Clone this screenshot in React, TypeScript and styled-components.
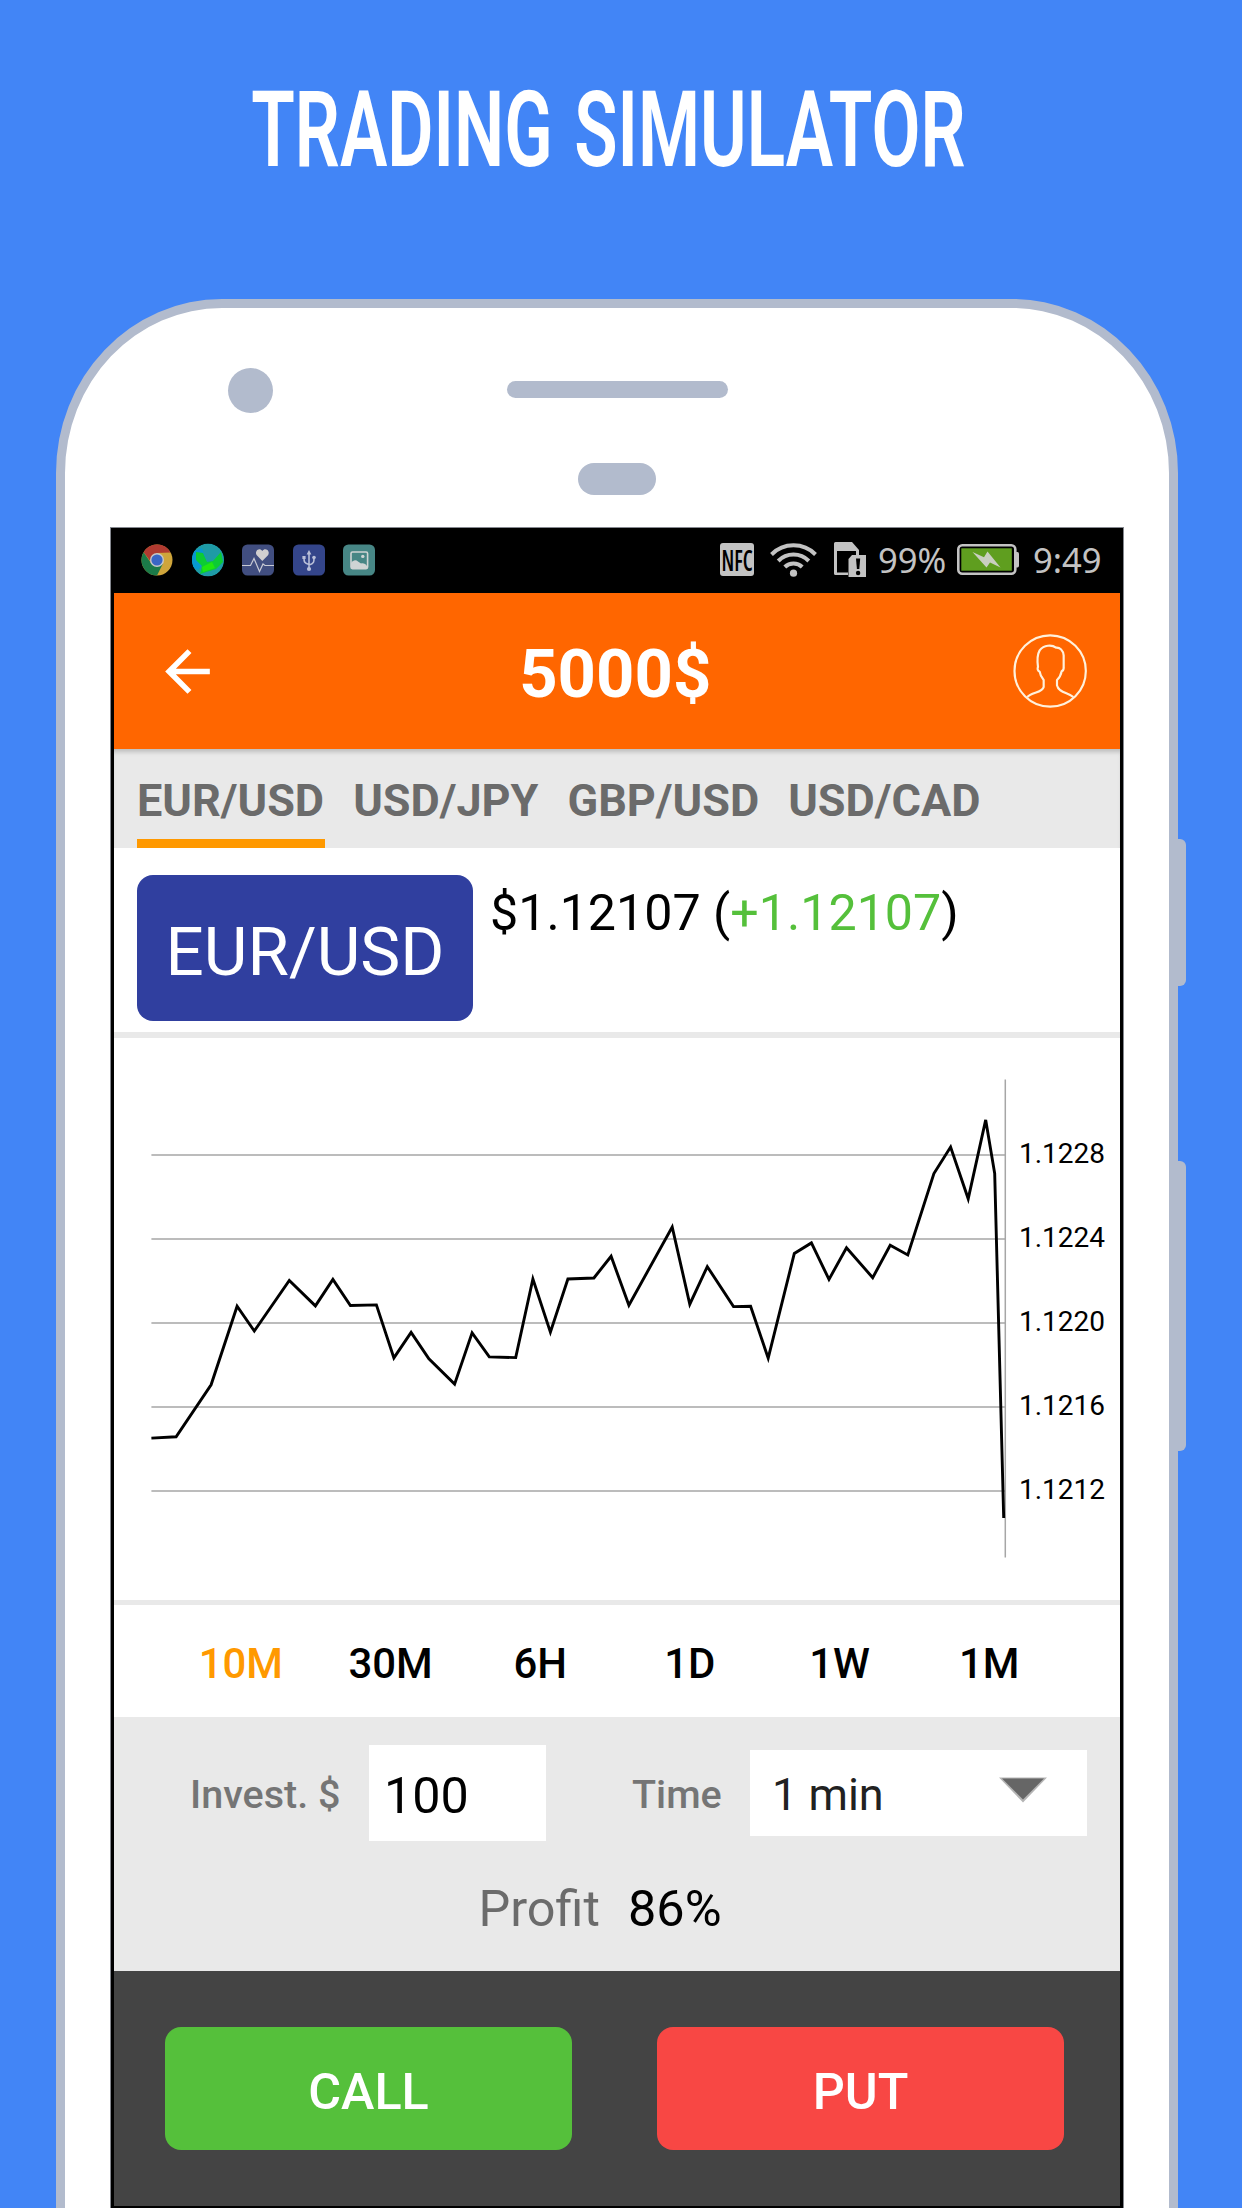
import React from "react";
import styled, { createGlobalStyle } from "styled-components";

const GlobalStyle = createGlobalStyle`
  *, *::before, *::after { box-sizing: border-box; }
  body { margin: 0; background: #4285f6; font-family: Roboto, "Liberation Sans", sans-serif; }
`;

const Page = styled.main`
  display: flex;
  flex-direction: column;
  width: 1242px;
  height: 2208px;
  overflow: hidden;
  background: #4285f6;
`;

const Headline = styled.h1`
  display: flex;
  justify-content: center;
  height: 299px;
  margin: 0;
  padding: 78px 26px 0 0;
  flex: none;
  color: #fff;
  font-family: Roboto, "Open Sans", sans-serif;
  font-size: 105px;
  font-weight: 600;
  line-height: 106px;
  word-spacing: 6px;
  white-space: nowrap;
`;

const HeadlineText = styled.span`
  transform: scaleX(0.676);
`;

const Device = styled.div`
  display: flex;
  align-items: flex-start;
  margin-left: 56px;
`;

const Phone = styled.section`
  width: 1122px;
  height: 2100px;
  padding: 60px 46px 0;
  border: 9px solid #b2bbcd;
  border-radius: 166px 166px 0 0 / 174px 174px 0 0;
  background: #fff;
`;

const SideKeys = styled.div`
  display: flex;
  flex-direction: column;
  gap: 175px;
  padding-top: 540px;
`;

const SideKey = styled.div<{ $height: number }>`
  width: 8px;
  height: ${(p) => p.$height}px;
  border-radius: 0 6px 6px 0;
  background: #b2bbcd;
`;

const SensorRow = styled.div`
  display: flex;
  align-items: center;
  height: 44px;
  padding-left: 117px;
  gap: 234px;
`;

const Camera = styled.div`
  width: 45px;
  height: 45px;
  border-radius: 50%;
  background: #b2bbcd;
`;

const Speaker = styled.div`
  width: 221px;
  height: 17px;
  margin-bottom: 2px;
  border-radius: 9px;
  background: #b2bbcd;
`;

const Proximity = styled.div`
  width: 78px;
  height: 32px;
  margin: 51px 0 33px 467px;
  border-radius: 16px;
  background: #b2bbcd;
`;

const Screen = styled.div`
  display: flex;
  flex-direction: column;
  width: 1012px;
  height: 1680px;
  border: solid #000;
  border-width: 0 3px 2px;
  background: #fff;
  box-shadow: 0 0 0 1px #85888f;
`;

const StatusBar = styled.div`
  display: flex;
  align-items: center;
  justify-content: space-between;
  height: 65px;
  padding: 0 19px 2px 27px;
  background: #000;
  color: #c3c3c3;
  font-family: "Noto Sans", "Open Sans", sans-serif;
  font-size: 34.6px;
  line-height: 48px;
`;

const Notifications = styled.div`
  display: flex;
  align-items: center;
  gap: 18.5px;
`;

const SystemIcons = styled.div`
  display: flex;
  align-items: center;
`;

const NfcBadge = styled.span`
  display: flex;
  align-items: center;
  justify-content: center;
  width: 34px;
  height: 33px;
  border-radius: 3px;
  background: #c3c3c3;
  color: #000;
  font-family: "Open Sans", sans-serif;
  font-stretch: 75%;
  font-size: 29px;
  font-weight: 600;
`;

const NfcText = styled.span`
  transform: scaleX(0.74);
`;

const Wifi = styled.svg`
  margin: 0 17px 0 16px;
`;

const Battery = styled.svg`
  margin: 0 14px 0 10px;
`;

const StatusText = styled.span<{ $width: number }>`
  width: ${(p) => p.$width}px;
  margin-top: 1px;
  white-space: nowrap;
`;

const SimIcon = styled.svg`
  margin-right: 10px;
`;

const AppBar = styled.header`
  display: flex;
  align-items: center;
  justify-content: space-between;
  height: 156px;
  padding: 0 33.5px 0 40px;
  background: #ff6600;
`;

const Balance = styled.h2`
  margin: 0;
  padding: 6px 3px 0 0;
  flex: 1;
  text-align: center;
  color: #fff;
  font-size: 67px;
  font-weight: 700;
  line-height: 80px;
`;

const Tabs = styled.nav`
  display: flex;
  gap: 28px;
  height: 99px;
  padding-left: 23px;
  background: #e9e9e9;
  box-shadow: inset 0 5px 4px -2px #bdbdbd;
`;

const Tab = styled.span<{ $active?: boolean }>`
  height: 99px;
  padding: 12px 1px 0 0;
  border-bottom: 9px solid ${(p) => (p.$active ? "#ff9900" : "transparent")};
  color: #6b6b6b;
  font-size: 45px;
  font-weight: 700;
  line-height: 80px;
  white-space: nowrap;
`;

const Quote = styled.div`
  display: flex;
  align-items: flex-start;
  height: 184px;
  padding: 27px 0 0 23px;
  gap: 17px;
`;

const PairBadge = styled.div`
  display: flex;
  align-items: center;
  justify-content: center;
  width: 336px;
  height: 146px;
  padding-top: 7px;
  border-radius: 16px;
  background: #303f9f;
  color: #fff;
  font-size: 67.3px;
`;

const Price = styled.div`
  padding-top: 8px;
  color: #000;
  font-size: 50.2px;
  line-height: 59px;
  white-space: nowrap;
`;

const Gain = styled.span`
  color: #55c03b;
`;

const Divider = styled.div<{ $height: number }>`
  flex: none;
  height: ${(p) => p.$height}px;
  background: #e9e9e9;
`;

const Chart = styled.svg`
  display: block;
  flex: none;
`;

const Ranges = styled.div`
  display: flex;
  height: 112px;
  padding: 0 56px 0 52px;
`;

const Range = styled.span<{ $active?: boolean }>`
  flex: 1;
  text-align: center;
  color: ${(p) => (p.$active ? "#ff9900" : "#000")};
  font-size: 41.9px;
  font-weight: 500;
  line-height: 117px;
`;

const Order = styled.div`
  height: 254px;
  padding-top: 28px;
  background: #e9e9e9;
`;

const OrderRow = styled.div`
  display: flex;
  align-items: center;
  height: 96px;
  padding-left: 76px;
`;

const FieldLabel = styled.span<{ $width: number }>`
  width: ${(p) => p.$width}px;
  padding-top: 2px;
  color: #757575;
  font-size: 39.5px;
  font-weight: 500;
  white-space: nowrap;
`;

const AmountField = styled.div`
  width: 177px;
  height: 96px;
  margin-right: 86px;
  padding: 5px 0 0 15px;
  background: #fff;
  color: #000;
  font-size: 50.3px;
  line-height: 92px;
`;

const TimeField = styled.div`
  display: flex;
  justify-content: space-between;
  width: 337px;
  height: 86px;
  padding: 2px 40px 0 22px;
  background: #fff;
  color: #212121;
  font-size: 45px;
  line-height: 86px;
`;

const Caret = styled.svg`
  margin-top: 25px;
`;

const ProfitRow = styled.div`
  display: flex;
  gap: 28px;
  padding: 37px 0 0 364.5px;
  color: #000;
  font-size: 50.4px;
  line-height: 62px;
`;

const Muted = styled.span`
  color: #6b6b6b;
`;

const Actions = styled.footer`
  display: flex;
  flex: 1;
  gap: 85px;
  padding: 56px 0 0 51px;
  background: #444;
`;

const ActionButton = styled.button<{ $color: string }>`
  width: 407px;
  height: 123px;
  padding: 5px 0 0;
  border: 0;
  border-radius: 16px;
  background: ${(p) => p.$color};
  color: #fff;
  font-family: inherit;
  font-size: 50.3px;
  font-weight: 500;
`;

const series: [number, number][] = [
  [151.4, 1438.1], [176.1, 1436.8], [211.1, 1384.8], [237.1, 1306.2], [254.3, 1331],
  [289.3, 1280.4], [315.4, 1305.9], [332.9, 1279.4], [350.4, 1305.5], [376.4, 1304.9],
  [393.9, 1357.9], [411.1, 1332.4], [428.9, 1358.9], [454.6, 1384.1], [472.1, 1332.8],
  [489.3, 1356.9], [515.7, 1357.6], [532.9, 1279], [550.4, 1332.1], [567.9, 1279],
  [593.9, 1278], [611.1, 1256.3], [628.9, 1305.2], [672.2, 1227], [689.8, 1304.2],
  [707.3, 1266.6], [733.5, 1306.6], [750.6, 1306.2], [768.2, 1358.2], [794.3, 1253.5],
  [811.4, 1242.9], [829, 1279.4], [846.5, 1247.7], [872.7, 1277.7], [890.2, 1245.3],
  [907.8, 1254.9], [933.9, 1173.6], [950.6, 1147.1], [968.2, 1198.8], [985.7, 1119.9],
  [994.7, 1173.6], [1003.7, 1518],
];

const levels = ["1.1228", "1.1224", "1.1220", "1.1216", "1.1212"];

function PriceChart() {
  return (
    <Chart width="1006" height="562" viewBox="114 1038 1006 562">
      {levels.map((label, i) => {
        const y = 1155.1 + i * 84;
        return (
          <g key={label}>
            <line x1="151.4" x2="1005" y1={y} y2={y} stroke="#a6a6a6" strokeWidth="1.5" />
            <text x="1019" y={y + 7.6} fontSize="28" fill="#000" fontFamily="Roboto, sans-serif">
              {label}
            </text>
          </g>
        );
      })}
      <line x1="1005.3" x2="1005.3" y1="1079.6" y2="1557.6" stroke="#a6a6a6" strokeWidth="1.5" />
      <polyline
        points={series.map((p) => p.join(",")).join(" ")}
        fill="none"
        stroke="#000"
        strokeWidth="2.9"
      />
    </Chart>
  );
}

const ChromeIcon = () => (
  <svg width="32" height="34" viewBox="-16 -17 32 34">
    <circle r="15.5" fill="#cfa53b" />
    <path d="M-13.4 -7.8 A15.5 15.5 0 0 1 13.6 -7.4 L0 -7 L-6 2 Z" fill="#b03a30" />
    <path d="M-13.4 -7.8 A15.5 15.5 0 0 0 0 15.5 L6 3.5 L-6 3 Z" fill="#1b7a48" />
    <circle r="7" fill="#c8c8c8" />
    <circle r="5.6" fill="#3a66c4" />
  </svg>
);

const GlobeIcon = () => (
  <svg width="32" height="34" viewBox="-16 -17 32 34">
    <defs>
      <clipPath id="globe">
        <ellipse rx="16" ry="16.5" />
      </clipPath>
    </defs>
    <g clipPath="url(#globe)">
      <circle r="16.5" fill="#1e9ba6" />
      <path d="M-17 -8 L-6 -12 L-2 0 L-10 10 L-17 6Z" fill="#0798cf" />
      <path d="M-12 -8 L-5 -7 L-1 2 L5 1 L13 -8 L15 2 L8 9 L-8 14 L-6 6 L-12 0Z" fill="#0ccb35" />
      <path d="M-6 7 L4 2 L7 8 L-5 12Z" fill="#22e60e" />
    </g>
  </svg>
);

const HeartRateIcon = () => (
  <svg width="32" height="32" viewBox="0 0 32 32">
    <rect width="32" height="31" y="0.5" rx="5.5" fill="#414e80" />
    <path d="M20.3 17 L14.8 11.3 C12 7 17.5 2.8 20.3 7 C23.2 2.8 28.8 7 26 11.3 Z" fill="#d2d0d0" />
    <path d="M0 21.5 H8.5 L12 14.5 L17.5 27.5 L21 20 L23 21.5 H32" fill="none" stroke="#c8cad4" strokeWidth="1.2" />
  </svg>
);

const UsbIcon = () => (
  <svg width="32" height="32" viewBox="0 0 32 32">
    <rect width="32" height="31" y="0.5" rx="5.5" fill="#34458a" />
    <g fill="none" stroke="#b9bfd8" strokeWidth="1.6">
      <path d="M16 25 V9 M16 20.5 C11 19 11 17.5 11 14 M16 21 C21 19.5 21 18 21 14" />
    </g>
    <path d="M16 6 L18.4 10.5 H13.6Z M9.4 12 h3.2 v3 h-3.2z" fill="#b9bfd8" />
    <circle cx="21" cy="13.5" r="1.8" fill="#b9bfd8" />
    <circle cx="16" cy="25" r="2.1" fill="#b9bfd8" />
  </svg>
);

const GalleryIcon = () => (
  <svg width="32" height="32" viewBox="0 0 32 32">
    <rect width="32" height="31" y="0.5" rx="5.5" fill="#478685" />
    <rect x="8" y="8" width="16.6" height="16.6" rx="1.5" fill="none" stroke="#cfd4d4" strokeWidth="1.6" />
    <path d="M8 19 C10 16 13 15.5 15 17.5 L18 19.5 C20 18.5 23 20 24 22 V24.5 H8Z" fill="#cfd4d4" />
    <circle cx="19.8" cy="12.4" r="1.7" fill="#cfd4d4" />
  </svg>
);

export default function App() {
  return (
    <>
      <GlobalStyle />
      <Page>
        <Headline>
          <HeadlineText>TRADING SIMULATOR</HeadlineText>
        </Headline>
        <Device>
          <Phone>
            <SensorRow>
              <Camera />
              <Speaker />
            </SensorRow>
            <Proximity />
            <Screen>
              <StatusBar>
                <Notifications>
                  <ChromeIcon />
                  <GlobeIcon />
                  <HeartRateIcon />
                  <UsbIcon />
                  <GalleryIcon />
                </Notifications>
                <SystemIcons>
                  <NfcBadge>
                    <NfcText>NFC</NfcText>
                  </NfcBadge>
                  <Wifi width="47" height="35" viewBox="0 0 47 35">
                    <g fill="none" stroke="#c3c3c3" strokeWidth="4">
                      <path d="M1.5 12.5 A31 31 0 0 1 45.5 12.5" />
                      <path d="M8.2 19 A21.5 21.5 0 0 1 38.8 19" />
                      <path d="M14.8 25 A12.3 12.3 0 0 1 32.2 25" />
                    </g>
                    <circle cx="23.5" cy="31.2" r="3.6" fill="#c3c3c3" />
                  </Wifi>
                  <SimIcon width="34" height="35" viewBox="0 0 34 35">
                    <path d="M1.5 0 H18 L25 8 V14 H22 V9 H3 V30.5 H14 V33 H1.5 Q0 33 0 31.5 V1.5 Q0 0 1.5 0Z" fill="#c3c3c3" />
                    <path d="M18 13 H32 V35 H14.5 V17Z" fill="#c3c3c3" />
                    <path d="M22 16.5 H26.2 L25.3 27 H22.9Z" fill="#000" />
                    <circle cx="24.1" cy="31" r="2.2" fill="#000" />
                  </SimIcon>
                  <StatusText $width={69}>99%</StatusText>
                  <Battery width="62" height="31" viewBox="0 0 62 31">
                    <rect x="1.3" y="1.3" width="57" height="28.4" rx="4" fill="#000" stroke="#c3c3c3" strokeWidth="2.6" />
                    <rect x="4.3" y="4.3" width="50.5" height="22.4" fill="#5f9e1f" />
                    <path d="M58 8 H60.5 Q62 8 62 10 V21.5 Q62 23.5 60.5 23.5 H58Z" fill="#c3c3c3" />
                    <path d="M15.5 8 L27 13.3 L30.5 7.5 L43.5 23.5 L33 18.5 L29.5 23.5Z" fill="#c9cfc0" />
                  </Battery>
                  <StatusText $width={68}>9:49</StatusText>
                </SystemIcons>
              </StatusBar>
              <AppBar>
                <svg width="67" height="67" viewBox="0 0 24 24">
                  <path d="M20 11H7.83l5.59-5.59L12 4l-8 8 8 8 1.41-1.41L7.83 13H20v-2z" fill="#fff" />
                </svg>
                <Balance>5000$</Balance>
                <svg width="74" height="74" viewBox="97 71 222 222">
                  <g fill="none" stroke="#fff1dc" strokeWidth="6.5" strokeLinejoin="round">
                    <circle cx="208.5" cy="182" r="107" />
                    <path d="M140 260 C152 246 186 247 189 230 V209 C182 201 178 192 177 184 C170 181 170 174 172 170 C169 148 170 132 177 120 C190 104 213 102 226 112 C238 111 247 120 249 135 V168 C250 175 249 180 243 183 C241 193 236 203 229 209 V225 C233 246 264 247 278 260" />
                  </g>
                </svg>
              </AppBar>
              <Tabs>
                <Tab $active>EUR/USD</Tab>
                <Tab>USD/JPY</Tab>
                <Tab>GBP/USD</Tab>
                <Tab>USD/CAD</Tab>
              </Tabs>
              <Quote>
                <PairBadge>EUR/USD</PairBadge>
                <Price>
                  $1.12107 (<Gain>+1.12107</Gain>)
                </Price>
              </Quote>
              <Divider $height={6} />
              <PriceChart />
              <Divider $height={5} />
              <Ranges>
                <Range $active>10M</Range>
                <Range>30M</Range>
                <Range>6H</Range>
                <Range>1D</Range>
                <Range>1W</Range>
                <Range>1M</Range>
              </Ranges>
              <Order>
                <OrderRow>
                  <FieldLabel $width={179}>Invest. $</FieldLabel>
                  <AmountField>100</AmountField>
                  <FieldLabel $width={118}>Time</FieldLabel>
                  <TimeField>
                    1 min
                    <Caret width="48" height="26" viewBox="0 0 48 26">
                      <path d="M0 0.5 H48 L24 25.5Z" fill="#b5b5b5" />
                      <path d="M3 1.5 H45 L24 22.5Z" fill="#666" />
                    </Caret>
                  </TimeField>
                </OrderRow>
                <ProfitRow>
                  <Muted>Profit</Muted>
                  <span>86%</span>
                </ProfitRow>
              </Order>
              <Actions>
                <ActionButton $color="#55c03b">CALL</ActionButton>
                <ActionButton $color="#f84744">PUT</ActionButton>
              </Actions>
            </Screen>
          </Phone>
          <SideKeys>
            <SideKey $height={147} />
            <SideKey $height={290} />
          </SideKeys>
        </Device>
      </Page>
    </>
  );
}
